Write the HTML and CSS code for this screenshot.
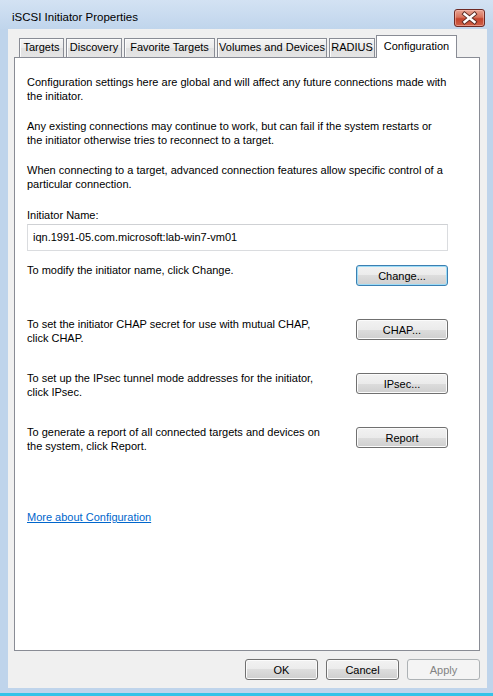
FILE: index.html
```html
<!DOCTYPE html>
<html lang="en">
<head>
  <meta charset="UTF-8" />
  <meta name="viewport" content="width=device-width, initial-scale=1.0"/>
  <title>iSCSI Initiator Properties</title>
  <link rel="stylesheet" href="styles.css">
</head>
<body>

  <div class="window">
    <div class="titlebar">
      <span class="title">iSCSI Initiator Properties</span>
      <button class="close" aria-label="Close">
        <svg width="31" height="18" viewBox="0 0 31 18">
          <path d="M10.5 5 L20.5 13 M20.5 5 L10.5 13" stroke="#5a2a22" stroke-width="4.2" stroke-linecap="square" fill="none"/>
          <path d="M10.5 5 L20.5 13 M20.5 5 L10.5 13" stroke="#ffffff" stroke-width="2.4" stroke-linecap="square" fill="none"/>
        </svg>
      </button>
    </div>

    <div class="client">
      <div class="tabs">
        <div class="tab tab-targets">Targets</div>
        <div class="tab tab-discovery">Discovery</div>
        <div class="tab tab-favorite">Favorite Targets</div>
        <div class="tab tab-volumes">Volumes and Devices</div>
        <div class="tab tab-radius">RADIUS</div>
        <div class="tab tab-config selected">Configuration</div>
      </div>

      <div class="panel">
        <p>Configuration settings here are global and will affect any future connections made with<br>the initiator.</p>
        <p>Any existing connections may continue to work, but can fail if the system restarts or<br>the initiator otherwise tries to reconnect to a target.</p>
        <p>When connecting to a target, advanced connection features allow specific control of a<br>particular connection.</p>

        <div class="label">Initiator Name:</div>
        <div class="field">iqn.1991-05.com.microsoft:lab-win7-vm01</div>

        <div class="action-row">
          <div class="action-text">To modify the initiator name, click Change.</div>
          <button class="btn default">Change...</button>
        </div>
        <div class="action-row">
          <div class="action-text">To set the initiator CHAP secret for use with mutual CHAP,<br>click CHAP.</div>
          <button class="btn">CHAP...</button>
        </div>
        <div class="action-row">
          <div class="action-text">To set up the IPsec tunnel mode addresses for the initiator,<br>click IPsec.</div>
          <button class="btn">IPsec...</button>
        </div>
        <div class="action-row">
          <div class="action-text">To generate a report of all connected targets and devices on<br>the system, click Report.</div>
          <button class="btn">Report</button>
        </div>

        <a class="more-link" href="#">More about Configuration</a>
      </div>

      <div class="dialog-buttons">
        <button class="btn">OK</button>
        <button class="btn">Cancel</button>
        <button class="btn" disabled>Apply</button>
      </div>
    </div>
  </div>

</body>
</html>
```
FILE: styles.css
```css
body {
  margin: 0;
  font-family: "Liberation Sans", Arial, sans-serif;
  font-size: 11px;
  color: #000;
}
.window {
  width: 493px;
  height: 696px;
  box-sizing: border-box;
  background: #bfd4eb;
  border-bottom: 3px solid #33c3e8;
  display: flex;
  flex-direction: column;
}
.titlebar {
  height: 29px;
  flex: none;
  display: flex;
  justify-content: space-between;
  align-items: flex-start;
  padding: 0 8px 0 12px;
  background: linear-gradient(#d3e2f3, #c0d5ec);
}
.title {
  margin-top: 10px;
  font-size: 11.5px;
  line-height: 14px;
}
.close {
  margin-top: 9px;
  width: 31px;
  height: 18px;
  padding: 0;
  border: 1px solid #6e2a24;
  border-radius: 3px;
  background: linear-gradient(#e8a493, #d8735c 45%, #c4432c 55%, #cf6249);
  box-shadow: inset 0 0 0 1px rgba(255, 200, 190, 0.5);
  display: flex;
  align-items: center;
  justify-content: center;
}
.close svg {
  display: block;
  margin: -1px;
}
.client {
  flex: none;
  height: 659px;
  box-sizing: border-box;
  margin: 0 6px 0 8px;
  padding: 7px 7px 8px 6px;
  background: #f0f0f0;
  display: flex;
  flex-direction: column;
}
.tabs {
  display: flex;
  align-items: flex-end;
  padding-left: 5px;
  height: 21px;
}
.tab {
  box-sizing: border-box;
  height: 19px;
  margin-right: 2px;
  border: 1px solid #898c95;
  border-bottom: none;
  background: linear-gradient(#f4f4f4, #ebebeb 50%, #e0e0e0 50%, #e5e5e5);
  box-shadow: inset 1px 1px 0 #fcfcfc;
  text-align: center;
  line-height: 17px;
  white-space: nowrap;
}
.tab-targets { width: 45px; }
.tab-discovery { width: 56px; }
.tab-favorite { width: 91px; }
.tab-volumes { width: 110px; }
.tab-radius { width: 46px; }
.tab-config { width: 81px; margin-left: -1px; }
.tab.selected {
  position: relative;
  z-index: 1;
  height: 23px;
  margin-bottom: -1px;
  background: #fff;
  box-shadow: none;
  line-height: 14px;
  padding-top: 3px;
}
.panel {
  flex: 1;
  border: 1px solid #898c95;
  background: #fff;
  padding: 17px 31px 0 12px;
  line-height: 14px;
}
.panel p {
  margin: 0 0 16px;
}
.label {
  margin-top: 17px;
}
.field {
  margin-top: 2px;
  height: 27px;
  box-sizing: border-box;
  border: 1px solid #dadcdf;
  border-top-color: #cfd1d4;
  padding-left: 5px;
  line-height: 25px;
}
.action-row {
  display: flex;
  justify-content: space-between;
  align-items: flex-start;
  height: 54px;
}
.action-row:first-of-type {
  margin-top: 12px;
}
.field + .action-row {
  margin-top: 12px;
}
.action-row .btn {
  margin-top: 2px;
  width: 92px;
}
.more-link {
  display: inline-block;
  margin-top: 31px;
  color: #0066cc;
}
.btn {
  height: 21px;
  padding: 0;
  border: 1px solid #707070;
  border-radius: 3px;
  background: linear-gradient(#f2f2f2, #ebebeb 50%, #dddddd 50%, #cfcfcf);
  box-shadow: inset 0 0 0 1px #fbfbfb;
  font-family: inherit;
  font-size: 11px;
  color: #000;
}
.btn.default {
  border-color: #3c7fb1;
  box-shadow: inset 0 0 0 1px #9ddcf7;
}
.btn:disabled {
  border-color: #adb2b5;
  background: #f4f4f4;
  box-shadow: none;
  color: #838383;
}
.dialog-buttons {
  display: flex;
  justify-content: flex-end;
  gap: 8px;
  margin-top: 8px;
}
.dialog-buttons .btn {
  width: 73px;
}
```
